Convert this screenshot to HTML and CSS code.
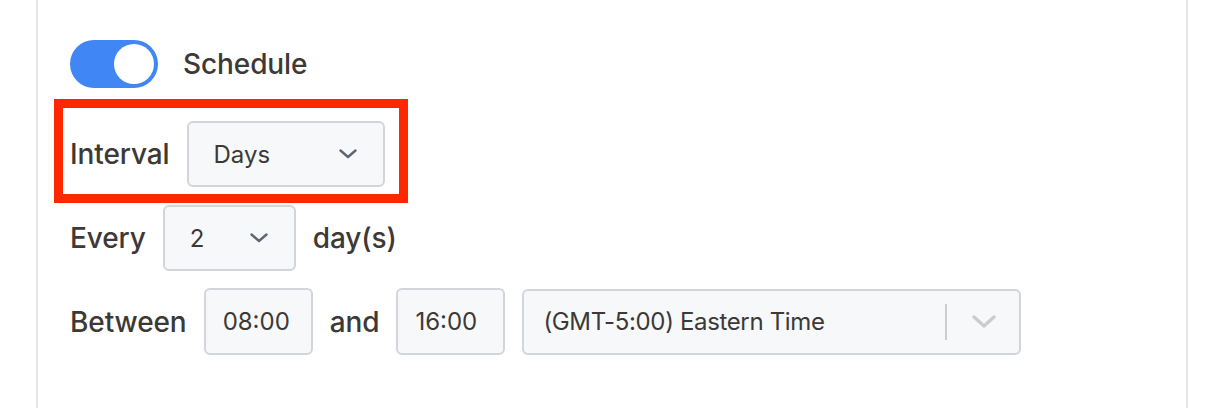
FILE: index.html
```html
<!DOCTYPE html>
<html lang="en">
<head>
<meta charset="utf-8">
<title>Schedule</title>
<link rel="stylesheet" href="styles.css">
</head>
<body>
<div class="panel">
  <div class="row row-toggle">
    <span class="toggle"><span class="knob"></span></span>
    <span class="label">Schedule</span>
  </div>
  <div class="highlight">
    <div class="row">
      <span class="label">Interval</span>
      <div class="select select-days">
        <span class="value">Days</span>
        <svg class="chev" width="18" height="10" viewBox="0 0 18 10"><path d="M1.5 1.5 L9 8 L16.5 1.5" fill="none" stroke="#5f6672" stroke-width="2.4" stroke-linecap="round" stroke-linejoin="round"/></svg>
      </div>
    </div>
  </div>
  <div class="row row-every">
    <span class="label">Every</span>
    <div class="select select-num">
      <span class="value">2</span>
      <svg class="chev" width="18" height="10" viewBox="0 0 18 10"><path d="M1.5 1.5 L9 8 L16.5 1.5" fill="none" stroke="#5f6672" stroke-width="2.4" stroke-linecap="round" stroke-linejoin="round"/></svg>
    </div>
    <span class="label">day(s)</span>
  </div>
  <div class="row row-between">
    <span class="label">Between</span>
    <div class="input"><span class="value">08:00</span></div>
    <span class="label">and</span>
    <div class="input"><span class="value">16:00</span></div>
    <div class="tz">
      <span class="value tz-value">(GMT-5:00) Eastern Time</span>
      <span class="tz-ind">
        <span class="sep"></span>
        <svg class="tz-chev" width="24" height="14" viewBox="0 0 24 14"><path d="M2 2 L12 11 L22 2" fill="none" stroke="#cccccc" stroke-width="3.4" stroke-linecap="round" stroke-linejoin="round"/></svg>
      </span>
    </div>
  </div>
</div>
</body>
</html>
```

FILE: styles.css
```css
* { box-sizing: border-box; }
html, body { margin: 0; padding: 0; background: #ffffff; }
body {
  font-family: Inter, "Noto Sans", "Liberation Sans", sans-serif;
  color: #3c3936;
  width: 1226px;
  height: 408px;
  overflow: hidden;
}
.panel {
  margin-left: 36px;
  width: 1152px;
  height: 408px;
  border-left: 2px solid #e5e5ea;
  border-right: 2px solid #e5e5ea;
  padding: 40px 0 0 32px;
}
.row {
  display: flex;
  align-items: center;
  gap: 17px;
}
.label {
  font-size: 28px;
  font-weight: 500;
  letter-spacing: -0.1px;
}
.value {
  font-size: 24px;
  font-weight: 400;
}
.tz-value { letter-spacing: -0.35px; }
.row-toggle { gap: 25px; height: 48px; }
.toggle {
  width: 88px;
  height: 48px;
  border-radius: 24px;
  background: #4186f5;
  display: flex;
  justify-content: flex-end;
  align-items: center;
  padding-right: 4px;
}
.knob {
  width: 40px;
  height: 40px;
  border-radius: 50%;
  background: #ffffff;
}
.highlight {
  display: inline-block;
  margin: 11px 0 0 -16px;
  border: 9px solid #fe2700;
  padding: 13px 14px 7px 7px;
}
.select {
  height: 66px;
  display: flex;
  align-items: center;
  justify-content: space-between;
  padding: 0 26px 0 25px;
  background: #f7f8fa;
  border: 2px solid #d2d5da;
  border-radius: 6px;
}
.select-days { width: 198px; }
.select-num { width: 133px; }
.row-every { margin-top: 2px; }
.row-between { margin-top: 17px; }
.input {
  width: 109px;
  height: 67px;
  display: flex;
  align-items: center;
  padding-left: 17px;
  background: #f7f8fa;
  border: 2px solid #d2d5da;
  border-radius: 6px;
}
.tz {
  width: 499px;
  height: 66px;
  display: flex;
  align-items: center;
  justify-content: space-between;
  padding: 0 0 0 19px;
  background: #f7f8fa;
  border: 2px solid #d2d5da;
  border-radius: 6px;
}
.tz-ind {
  display: flex;
  align-items: center;
  height: 100%;
}
.sep {
  width: 2px;
  height: 36px;
  background: #cccccc;
}
.tz-chev { margin: 0 23px 0 25px; }
```
